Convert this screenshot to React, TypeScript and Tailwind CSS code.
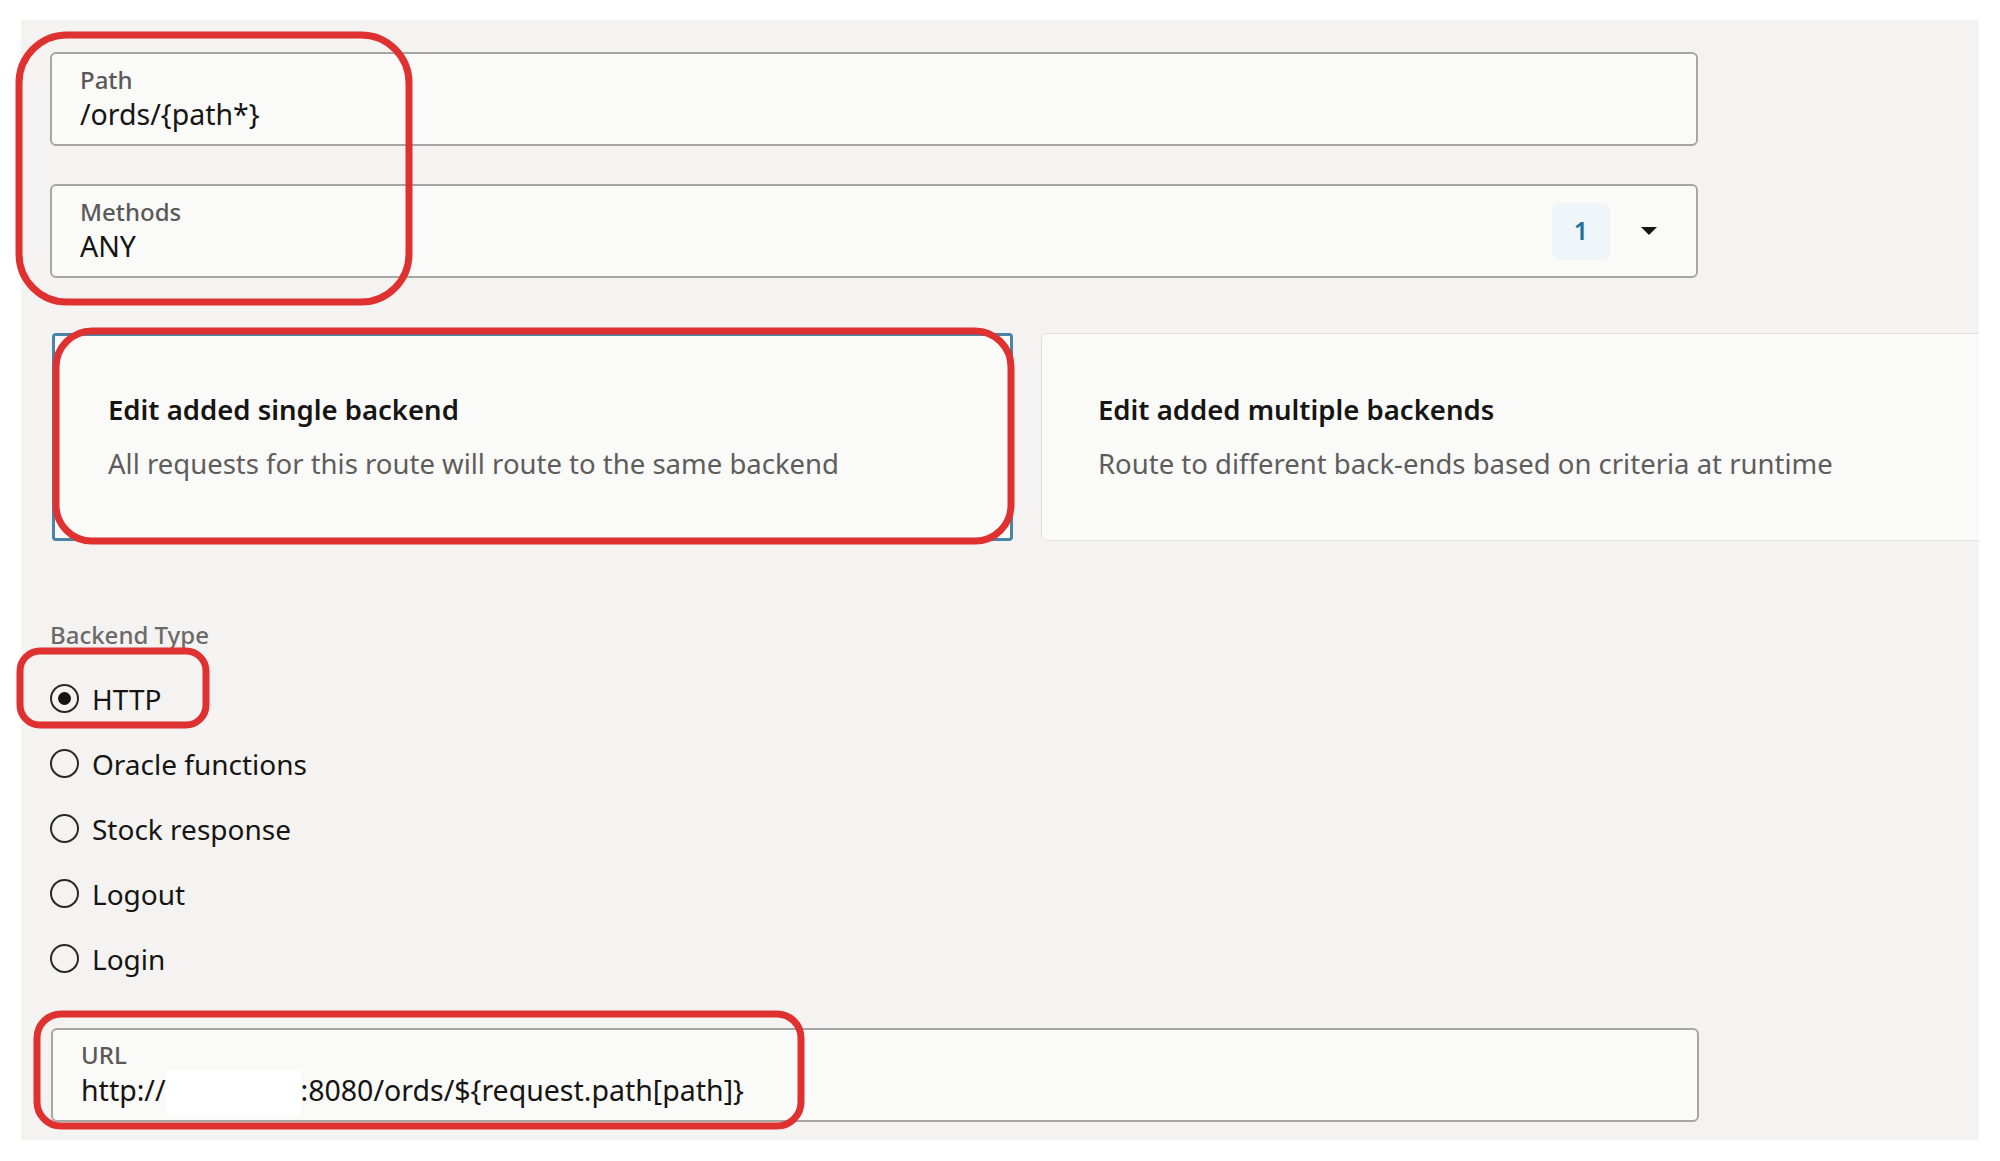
import React from "react";

const font = { fontFamily: '"Noto Sans", "Open Sans", Arial, sans-serif' };

function Field({
  label,
  children,
  right,
  shift = "-mt-[2px]",
}: {
  label: string;
  children: React.ReactNode;
  right?: React.ReactNode;
  shift?: string;
}) {
  return (
    <div className="w-[1648px] h-[94px] border-2 border-[#a6a6a4] rounded-[6px] bg-[#fafaf9] flex items-center">
      <div className={"flex-1 flex flex-col pl-[28px] " + shift}>
        <div className="text-[24px] leading-[28px] font-medium text-[#5a5957]">{label}</div>
        <div className="mt-[3px] text-[28.5px] leading-[34px] text-[#161513]">{children}</div>
      </div>
      {right}
    </div>
  );
}

function Radio({ label, checked }: { label: string; checked?: boolean }) {
  return (
    <div className="h-[65px] flex items-center">
      <div className="w-[29px] h-[29px] rounded-full border-[2.5px] border-[#2a2927] flex items-center justify-center">
        {checked && <div className="w-[13px] h-[13px] rounded-full bg-[#161513]" />}
      </div>
      <span className="ml-[13px] text-[28px] leading-[34px] text-[#161513]">{label}</span>
    </div>
  );
}

export default function App() {
  return (
    <div className="relative w-[2000px] h-[1161px] bg-white pt-[20px] pl-[21px]" style={font}>
      <div className="w-[1958px] h-[1120px] bg-[#f4f3f1] overflow-hidden pl-[29px] pt-[32px]">
        <div className="flex flex-col gap-[38px]">
          <Field label="Path">/ords/{"{path*}"}</Field>
          <Field
            label="Methods"
            right={
              <div className="flex items-center pr-[38px]">
                <div className="w-[58px] h-[57px] rounded-[8px] bg-[#eff5f9] flex items-center justify-center text-[25px] font-semibold text-[#1d7398]">
                  1
                </div>
                <svg width="18" height="10" viewBox="0 0 18 10" className="ml-[30px]">
                  <path d="M1 1 L17 1 L9 9 Z" fill="#161513" />
                </svg>
              </div>
            }
          >
            ANY
          </Field>
        </div>

        <div className="mt-[55px] ml-[2px] flex gap-[28px] w-[2200px]">
          <div className="w-[961px] h-[208px] shrink-0 rounded-[4px] border-[3px] border-[#4a84a6] bg-[#fafaf9] pl-[53px] pt-[57px]">
            <div className="text-[27.5px] leading-[34px] font-semibold text-[#161513]">Edit added single backend</div>
            <div className="mt-[20px] text-[27.5px] leading-[34px] text-[#5e5d5b]">
              All requests for this route will route to the same backend
            </div>
          </div>
          <div className="w-[961px] h-[208px] shrink-0 rounded-[6px] border border-[#e2e1df] bg-[#fafaf9] pl-[56px] pt-[59px]">
            <div className="text-[27.5px] leading-[34px] font-semibold text-[#161513]">Edit added multiple backends</div>
            <div className="mt-[20px] text-[27.5px] leading-[34px] text-[#5e5d5b]">
              Route to different back-ends based on criteria at runtime
            </div>
          </div>
        </div>

        <div className="mt-[79px] text-[24px] leading-[30px] font-medium text-[#6b6a68]">Backend Type</div>
        <div className="mt-[16px] flex flex-col">
          <Radio label="HTTP" checked />
          <Radio label="Oracle functions" />
          <Radio label="Stock response" />
          <Radio label="Logout" />
          <Radio label="Login" />
        </div>

        <div className="mt-[37px] ml-[1px]">
          <Field label="URL" shift="translate-y-[3px]">
            <span>http://</span>
            <span className="inline-block w-[135px] h-[45px] bg-white align-middle -mt-[2px]" />
            <span>:8080/ords/${"{request.path[path]}"}</span>
          </Field>
        </div>
      </div>

      <svg className="absolute inset-0 pointer-events-none" width="2000" height="1161" viewBox="0 0 2000 1161">
        <g fill="none" stroke="#e03131" strokeWidth="7">
          <rect x="19" y="35" width="390" height="267" rx="48" />
          <rect x="56" y="331" width="955" height="210" rx="36" />
          <rect x="20" y="651" width="186" height="74" rx="20" />
          <rect x="37" y="1014" width="764" height="112" rx="24" />
        </g>
      </svg>
    </div>
  );
}
